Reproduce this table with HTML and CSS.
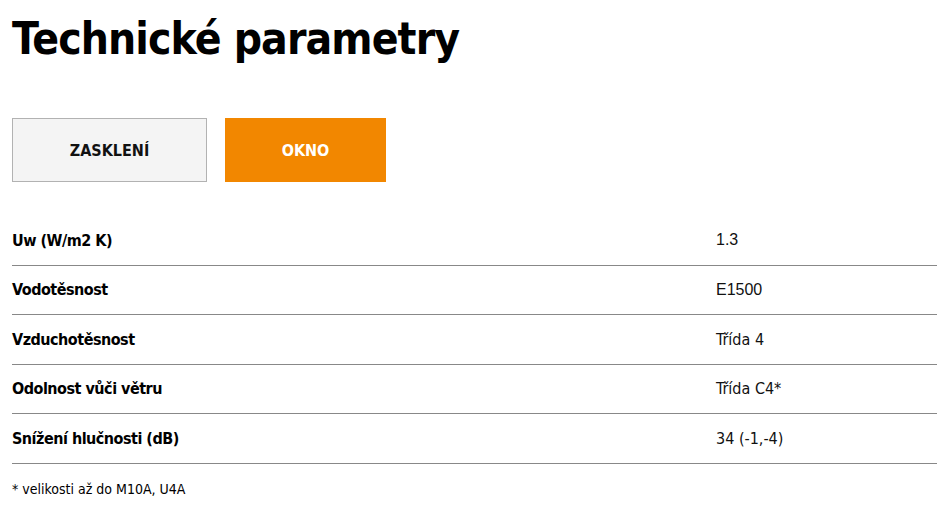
FILE: index.html
```html
<!DOCTYPE html>
<html lang="cs">
<head>
<meta charset="utf-8">
<title>Technické parametry</title>
<link rel="stylesheet" href="styles.css">
</head>
<body>
<main class="page">
  <h1 class="title">Technické parametry</h1>
  <div class="tabs">
    <button class="tab">ZASKLENÍ</button>
    <button class="tab tab-active">OKNO</button>
  </div>
  <table class="params">
    <tr><th>Uw (W/m2 K)</th><td class="arial">1.3</td></tr>
    <tr><th>Vodotěsnost</th><td class="arial">E1500</td></tr>
    <tr><th>Vzduchotěsnost</th><td>Třída 4</td></tr>
    <tr><th>Odolnost vůči větru</th><td>Třída C4*</td></tr>
    <tr><th>Snížení hlučnosti (dB)</th><td>34 (-1,-4)</td></tr>
  </table>
  <p class="note">* velikosti až do M10A, U4A</p>
</main>
</body>
</html>
```
FILE: styles.css
```css
html, body {
  margin: 0;
  padding: 0;
  background: #fff;
}
body {
  font-family: "DejaVu Sans Condensed", "DejaVu Sans", sans-serif;
  color: #000;
  overflow: hidden;
}
.page {
  padding: 0 0 0 12px;
}
.title {
  margin: 0;
  padding-top: 12px;
  font-size: 44px;
  line-height: 54px;
  font-weight: 700;
  letter-spacing: -0.9px;
}
.tabs {
  display: flex;
  gap: 18px;
  margin-top: 52px;
}
.tab {
  height: 64px;
  width: 195px;
  border: 1px solid #b2b2b2;
  background: #f4f4f4;
  font-family: inherit;
  font-size: 16px;
  font-weight: 700;
  color: #111;
  padding: 0;
}
.tab-active {
  width: 161px;
  background: #f28700;
  border-color: #f28700;
  color: #fff;
}
.params {
  width: 925px;
  border-collapse: collapse;
  margin-top: 34px;
}
.params th, .params td {
  height: 48.5px;
  padding: 0;
  border-bottom: 1px solid #888;
  font-size: 16px;
  text-align: left;
  vertical-align: middle;
}
.params th {
  font-weight: 700;
  width: 704px;
  letter-spacing: -0.5px;
}
.params td {
  font-weight: 400;
  color: #111;
}
.params td.arial {
  font-family: "Liberation Sans", Arial, sans-serif;
}
.note {
  margin: 17px 0 0;
  font-size: 14px;
}
```
